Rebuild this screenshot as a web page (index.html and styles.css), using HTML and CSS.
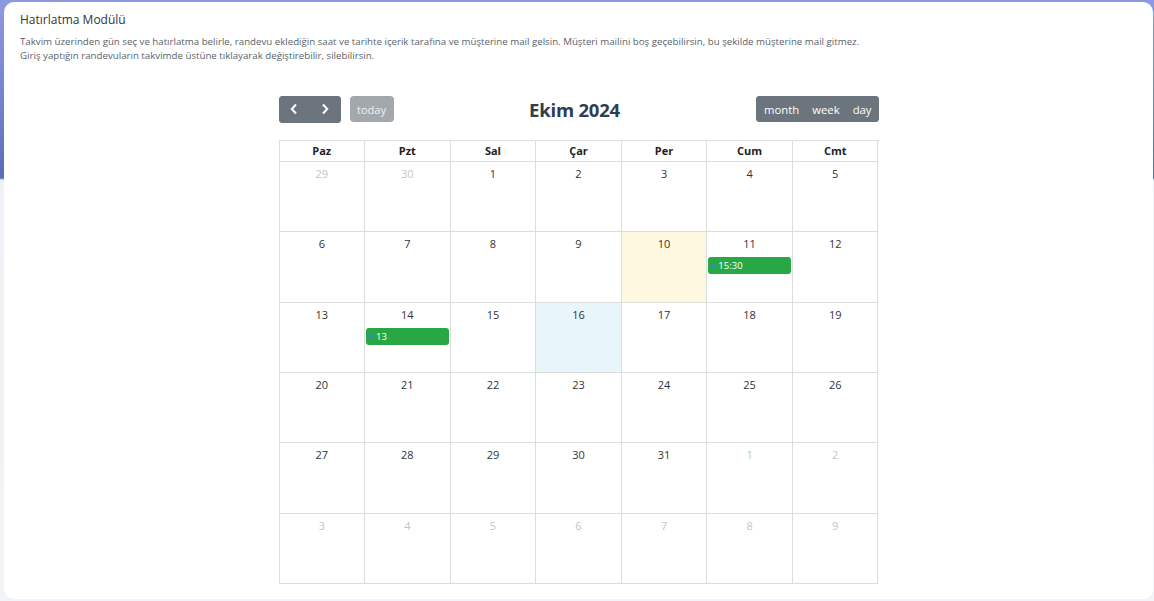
FILE: index.html
```html
<!DOCTYPE html>
<html lang="tr">
<head>
<meta charset="utf-8">
<title>Hatırlatma Modülü</title>
<link rel="stylesheet" href="styles.css">
</head>
<body>
<div class="card">
  <div class="card-title">Hatırlatma Modülü</div>
  <p class="desc">Takvim üzerinden gün seç ve hatırlatma belirle, randevu eklediğin saat ve tarihte içerik tarafına ve müşterine mail gelsin. Müşteri mailini boş geçebilirsin, bu şekilde müşterine mail gitmez.<br>Giriş yaptığın randevuların takvimde üstüne tıklayarak değiştirebilir, silebilirsin.</p>

  <div class="calendar">
    <div class="toolbar">
      <div class="tb-left">
        <div class="btn-group">
          <button class="btn icon-btn" aria-label="prev"><svg width="10" height="12" viewBox="0 0 10 12"><path d="M7 1.5 L2.8 6 L7 10.5" fill="none" stroke="#fff" stroke-width="2"/></svg></button>
          <button class="btn icon-btn" aria-label="next"><svg width="10" height="12" viewBox="0 0 10 12"><path d="M3 1.5 L7.2 6 L3 10.5" fill="none" stroke="#fff" stroke-width="2"/></svg></button>
        </div>
        <button class="btn today">today</button>
      </div>
      <h2 class="cal-title">Ekim 2024</h2>
      <div class="tb-right">
        <div class="btn-group views">
          <button class="btn view">month</button>
          <button class="btn view">week</button>
          <button class="btn view">day</button>
        </div>
      </div>
    </div>

    <div class="grid">
      <div class="hd">Paz</div><div class="hd">Pzt</div><div class="hd">Sal</div><div class="hd">Çar</div><div class="hd">Per</div><div class="hd">Cum</div><div class="hd">Cmt</div>

      <div class="day other"><span class="num">29</span></div>
      <div class="day other"><span class="num">30</span></div>
      <div class="day"><span class="num">1</span></div>
      <div class="day"><span class="num">2</span></div>
      <div class="day"><span class="num">3</span></div>
      <div class="day"><span class="num">4</span></div>
      <div class="day"><span class="num">5</span></div>

      <div class="day"><span class="num">6</span></div>
      <div class="day"><span class="num">7</span></div>
      <div class="day"><span class="num">8</span></div>
      <div class="day"><span class="num">9</span></div>
      <div class="day highlight"><span class="num">10</span></div>
      <div class="day"><span class="num">11</span><div class="event"><span class="dot"></span>15:30</div></div>
      <div class="day"><span class="num">12</span></div>

      <div class="day"><span class="num">13</span></div>
      <div class="day"><span class="num">14</span><div class="event"><span class="dot"></span>13</div></div>
      <div class="day"><span class="num">15</span></div>
      <div class="day today-cell"><span class="num">16</span></div>
      <div class="day"><span class="num">17</span></div>
      <div class="day"><span class="num">18</span></div>
      <div class="day"><span class="num">19</span></div>

      <div class="day"><span class="num">20</span></div>
      <div class="day"><span class="num">21</span></div>
      <div class="day"><span class="num">22</span></div>
      <div class="day"><span class="num">23</span></div>
      <div class="day"><span class="num">24</span></div>
      <div class="day"><span class="num">25</span></div>
      <div class="day"><span class="num">26</span></div>

      <div class="day"><span class="num">27</span></div>
      <div class="day"><span class="num">28</span></div>
      <div class="day"><span class="num">29</span></div>
      <div class="day"><span class="num">30</span></div>
      <div class="day"><span class="num">31</span></div>
      <div class="day other"><span class="num">1</span></div>
      <div class="day other"><span class="num">2</span></div>

      <div class="day other"><span class="num">3</span></div>
      <div class="day other"><span class="num">4</span></div>
      <div class="day other"><span class="num">5</span></div>
      <div class="day other"><span class="num">6</span></div>
      <div class="day other"><span class="num">7</span></div>
      <div class="day other"><span class="num">8</span></div>
      <div class="day other"><span class="num">9</span></div>
    </div>
  </div>
</div>
</body>
</html>
```

FILE: styles.css
```css
* { box-sizing: border-box; }

html, body { height: 100%; }

body {
  margin: 0;
  padding: 2px 1px 2px 4px;
  font-family: "Open Sans", "Noto Sans", sans-serif;
  color: #333;
  background:
    linear-gradient(to bottom, #8e9ae0 0, #6f7dcc 120px, #5a69b8 178px, #eef1f5 180px, #f2f4f7 100%);
  overflow: hidden;
}

.card {
  height: 597px;
  background: #fff;
  border-radius: 10px;
  padding: 9px 16px 0 16px;
}

.card-title {
  font-size: 12px;
  line-height: 17px;
  color: #2f3440;
}

.desc {
  margin: 7px 0 0 0;
  font-size: 9.7px;
  line-height: 14px;
  color: #5a5f6a;
}

.calendar {
  width: 600px;
  margin: 32px auto 0 auto;
}

.toolbar {
  display: flex;
  align-items: center;
  justify-content: space-between;
  height: 28px;
  margin-bottom: 17px;
}

.tb-left, .tb-right {
  flex: 1;
  display: flex;
  align-items: center;
}
.tb-right { justify-content: flex-end; }

.tb-left { gap: 9px; }

.btn-group {
  display: flex;
  border-radius: 4px;
  overflow: hidden;
  background: #6c757d;
}

.btn {
  border: none;
  margin: 0;
  font-family: inherit;
  color: #fff;
  background: #6c757d;
  font-size: 11px;
  cursor: pointer;
}

.icon-btn {
  width: 31px;
  height: 27px;
  display: flex;
  align-items: center;
  justify-content: center;
  padding: 0;
}

.today {
  height: 26px;
  width: 44px;
  padding: 0;
  border-radius: 4px;
  background: #a3a8ad;
  color: #eef0f2;
}

.views { height: 26px; }

.view {
  height: 26px;
  padding: 0 6px 0 7px;
  font-size: 11.3px;
}
.view:first-child { padding-left: 8px; padding-right: 6px; }
.view:last-child { padding-left: 7px; padding-right: 7px; }

.cal-title {
  margin: 0;
  font-size: 18.5px;
  font-weight: 700;
  color: #2c3e50;
  letter-spacing: -0.2px;
  white-space: nowrap;
  position: relative;
  left: -4px;
}

.grid {
  display: grid;
  grid-template-columns: repeat(7, 1fr);
  grid-template-rows: 21px repeat(6, 70.33px);
  border-top: 1px solid #ddd;
  border-left: 1px solid #ddd;
}

.hd, .day {
  border-right: 1px solid #ddd;
  border-bottom: 1px solid #ddd;
}

.hd {
  font-size: 11px;
  font-weight: 700;
  text-align: center;
  line-height: 19px;
  color: #222;
}

.day {
  padding-top: 4px;
  display: flex;
  flex-direction: column;
  align-items: stretch;
}

.num {
  display: block;
  text-align: center;
  font-size: 11px;
  line-height: 16px;
  color: #333;
}

.other .num { color: #c4c4c4; }

.highlight { background: #fef8e0; }
.today-cell { background: #e8f5fb; }

.event {
  margin: 5px 1px 0 1px;
  height: 17px;
  background: #28a745;
  border-radius: 3px;
  color: #fff;
  font-size: 9.5px;
  line-height: 17px;
  display: flex;
  align-items: center;
  padding-left: 3px;
}

.dot {
  width: 4px;
  height: 4px;
  border-radius: 50%;
  background: #3788d8;
  margin-right: 3px;
}
```
